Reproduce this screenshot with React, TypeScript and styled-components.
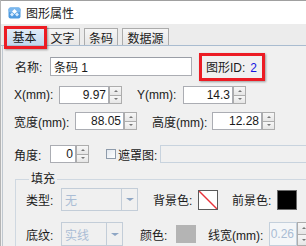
import React from 'react';
import styled, { createGlobalStyle } from 'styled-components';

const Global = createGlobalStyle`
  html, body { margin: 0; padding: 0; background: #f0f0f0; }
  body {
    font-family: "Liberation Sans", "Noto Sans CJK SC", sans-serif;
    font-size: 12px;
    color: #1a1a1a;
  }
  * { box-sizing: border-box; }
`;

const Window = styled.div`
  position: relative;
  width: 306px;
  height: 246px;
  overflow: hidden;
  background: #f0f0f0;
  border-left: 1px solid #b4b4b4;
`;

const TitleBar = styled.div`
  height: 24px;
  background: #ffffff;
  border-top: 1px solid #a0a0a0;
  display: flex;
  align-items: center;
  padding-left: 7px;
  gap: 5px;
`;

const TitleText = styled.span`
  font-size: 12px;
  color: #1a1a1a;
`;

const TabStrip = styled.div`
  position: relative;
  height: 22px;
  display: flex;
  align-items: flex-end;
  padding-left: 3px;
  gap: 4px;
  border-bottom: 1px solid #a9bcd0;
  background: #ececec;
`;

const Tab = styled.div<{ $active?: boolean; $w: number }>`
  width: ${p => p.$w}px;
  height: ${p => (p.$active ? 19 : 17)}px;
  display: flex;
  align-items: center;
  justify-content: center;
  font-size: 12px;
  border: 1px solid ${p => (p.$active ? '#8fa9c6' : '#acacac')};
  border-bottom: none;
  background: ${p =>
    p.$active
      ? 'linear-gradient(#e4eef9, #c2d8ee)'
      : 'linear-gradient(#f6f6f6, #e6e6e6)'};
  margin-right: ${p => (p.$active ? -4 : 0)}px;
`;

const Highlight = styled.div<{ $x: number; $y: number; $w: number; $h: number }>`
  position: absolute;
  left: ${p => p.$x}px;
  top: ${p => p.$y}px;
  width: ${p => p.$w}px;
  height: ${p => p.$h}px;
  border: 3px solid #ec1c24;
  box-shadow: 1px 1px 2px rgba(0, 0, 0, 0.35);
  pointer-events: none;
`;

const Panel = styled.div`
  margin-left: 1px;
  border-left: 1px solid #c0c8d0;
  height: 200px;
  display: flex;
  flex-direction: column;
`;

const Row = styled.div<{ $mt: number; $pl: number; $h: number }>`
  display: flex;
  align-items: center;
  height: ${p => p.$h}px;
  margin-top: ${p => p.$mt}px;
  padding-left: ${p => p.$pl}px;
  flex: none;
`;

const Label = styled.span<{ $w: number; $ml?: number }>`
  width: ${p => p.$w}px;
  margin-left: ${p => p.$ml ?? 0}px;
  flex: none;
  white-space: nowrap;
  font-size: 12px;
  color: #1a1a1a;
`;

const TextBox = styled.div<{ $w: number }>`
  width: ${p => p.$w}px;
  height: 100%;
  background: #fff;
  border: 1px solid #abadb3;
  border-top-color: #9a9ea6;
  display: flex;
  align-items: center;
  padding-left: 3px;
  font-size: 12px;
  flex: none;
`;

const NumBox = styled.div<{ $w: number; $disabled?: boolean }>`
  width: ${p => p.$w}px;
  height: 100%;
  background: ${p => (p.$disabled ? '#f4f6f8' : '#fff')};
  border: 1px solid ${p => (p.$disabled ? '#c4d0dc' : '#abadb3')};
  display: flex;
  align-items: center;
  justify-content: flex-end;
  padding-right: 2px;
  font-size: 12px;
  color: ${p => (p.$disabled ? '#a9bcd4' : '#1a1a1a')};
  flex: none;
`;

const SpinCol = styled.div`
  width: 13px;
  height: 100%;
  display: flex;
  flex-direction: column;
  flex: none;
`;

const SpinBtn = styled.div<{ $down?: boolean }>`
  flex: 1;
  border: 1px solid #adadad;
  ${p => (p.$down ? 'border-top: none;' : '')}
  background: linear-gradient(#f7f7f7, #e6e6e6);
  display: flex;
  align-items: center;
  justify-content: center;
`;

const Arrow = styled.div<{ $down?: boolean }>`
  width: 0;
  height: 0;
  border-left: 2px solid transparent;
  border-right: 2px solid transparent;
  ${p => (p.$down ? 'border-top: 2px solid #777;' : 'border-bottom: 2px solid #777;')}
`;

const IdText = styled.span`
  margin-left: 14px;
  font-size: 12px;
  color: #1a1a1a;
  white-space: nowrap;
`;

const IdValue = styled.span`
  margin-left: 5px;
  color: #1515e0;
`;

const CheckBox = styled.div`
  width: 10px;
  height: 10px;
  margin-left: 17px;
  border: 1px solid #8e9bab;
  background: linear-gradient(135deg, #e2e8ef, #ffffff);
  flex: none;
`;

const DisabledField = styled.div`
  width: 160px;
  height: 100%;
  border: 1px solid #c8d3de;
  background: #f0f0f0;
  flex: none;
`;

const Group = styled.fieldset`
  margin: 9px 0 0 12px;
  padding: 0 0 0 10px;
  border: 1px solid #cfd8e1;
  border-right: none;
  border-bottom: none;
  min-width: 0;
`;

const Legend = styled.legend`
  padding: 0 2px;
  margin-left: 3px;
  font-size: 12px;
  line-height: 14px;
  color: #1a1a1a;
`;

const GroupRow = styled.div<{ $mt: number; $h: number }>`
  display: flex;
  align-items: center;
  height: ${p => p.$h}px;
  margin-top: ${p => p.$mt}px;
`;

const Select = styled.div<{ $w: number }>`
  width: ${p => p.$w}px;
  height: 100%;
  border: 1px solid #c3cdd8;
  background: #f0f0f0;
  display: flex;
  flex: none;
`;

const SelectText = styled.div`
  flex: 1;
  display: flex;
  align-items: center;
  padding-left: 3px;
  color: #aabdd5;
  font-size: 12px;
`;

const SelectArrow = styled.div`
  width: 16px;
  border-left: 1px solid #c3cdd8;
  display: flex;
  align-items: center;
  justify-content: center;
  &::after {
    content: '';
    border-left: 4px solid transparent;
    border-right: 4px solid transparent;
    border-top: 3px solid #8ea6c4;
  }
`;

const Swatch = styled.div<{ $bg: string; $border: string; $h?: number }>`
  width: 20px;
  height: ${p => p.$h ?? 20}px;
  background: ${p => p.$bg};
  border: 1px solid ${p => p.$border};
  flex: none;
  position: relative;
  overflow: hidden;
`;

const Spinner = () => (
  <SpinCol>
    <SpinBtn>
      <Arrow />
    </SpinBtn>
    <SpinBtn $down>
      <Arrow $down />
    </SpinBtn>
  </SpinCol>
);

const AppIcon = () => (
  <svg width="13" height="12" viewBox="0 0 13 12">
    <rect x="0.5" y="0.5" width="12" height="11" rx="2" fill="#4f9be0" />
    <rect x="0.5" y="0.5" width="12" height="5" rx="2" fill="#7ab7ee" />
    <path d="M6.5 2 L9 4.5 L6.5 7 L4 4.5 Z" fill="#ffffff" />
    <path d="M4 5.5 L6 7.5 L4 9.5 L2 7.5 Z" fill="#d8ecff" />
    <path d="M9 5.5 L11 7.5 L9 9.5 L7 7.5 Z" fill="#d8ecff" />
  </svg>
);

const NoColor = () => (
  <svg width="18" height="18" viewBox="0 0 18 18" style={{ display: 'block' }}>
    <line x1="0" y1="0" x2="18" y2="18" stroke="#e8323a" strokeWidth="1.4" />
  </svg>
);

export default function App() {
  return (
    <>
      <Global />
      <Window>
        <TitleBar>
          <AppIcon />
          <TitleText>图形属性</TitleText>
        </TitleBar>
        <TabStrip>
          <Tab $active $w={41}>基本</Tab>
          <Tab $w={35}>文字</Tab>
          <Tab $w={34}>条码</Tab>
          <Tab $w={47}>数据源</Tab>
          <Highlight $x={3} $y={2} $w={43} $h={23} />
        </TabStrip>
        <Panel>
          <Row $mt={11} $pl={12} $h={19}>
            <Label $w={35}>名称:</Label>
            <TextBox $w={142}>条码 1</TextBox>
            <IdText>
              图形ID:<IdValue>2</IdValue>
            </IdText>
          </Row>
          <Row $mt={10} $pl={11} $h={18}>
            <Label $w={45}>X(mm):</Label>
            <NumBox $w={50}>9.97</NumBox>
            <Spinner />
            <Label $w={46} $ml={15}>Y(mm):</Label>
            <NumBox $w={50}>14.3</NumBox>
            <Spinner />
          </Row>
          <Row $mt={8} $pl={11} $h={18}>
            <Label $w={61}>宽度(mm):</Label>
            <NumBox $w={49}>88.05</NumBox>
            <Spinner />
            <Label $w={60} $ml={15}>高度(mm):</Label>
            <NumBox $w={50}>12.28</NumBox>
            <Spinner />
          </Row>
          <Row $mt={15} $pl={11} $h={18}>
            <Label $w={36}>角度:</Label>
            <NumBox $w={26}>0</NumBox>
            <Spinner />
            <CheckBox />
            <Label $w={42} $ml={2}>遮罩图:</Label>
            <DisabledField />
          </Row>
          <Group>
            <Legend>填充</Legend>
            <GroupRow $mt={2} $h={23}>
              <Label $w={35}>类型:</Label>
              <Select $w={77}>
                <SelectText>无</SelectText>
                <SelectArrow />
              </Select>
              <Label $w={45} $ml={15}>背景色:</Label>
              <Swatch $bg="#ffffff" $border="#5a5a5a">
                <NoColor />
              </Swatch>
              <Label $w={45} $ml={14}>前景色:</Label>
              <Swatch $bg="#000000" $border="#6a6a6a" />
            </GroupRow>
            <GroupRow $mt={11} $h={24}>
              <Label $w={35}>底纹:</Label>
              <Select $w={62}>
                <SelectText>实线</SelectText>
                <SelectArrow />
              </Select>
              <Label $w={36} $ml={17}>颜色:</Label>
              <Swatch $bg="#b4b4b4" $border="#b4b4b4" $h={18} />
              <Label $w={61} $ml={12}>线宽(mm):</Label>
              <NumBox $w={28} $disabled>0.26</NumBox>
              <Spinner />
            </GroupRow>
          </Group>
        </Panel>
        <Highlight $x={198} $y={53} $w={66} $h={28} />
      </Window>
    </>
  );
}
